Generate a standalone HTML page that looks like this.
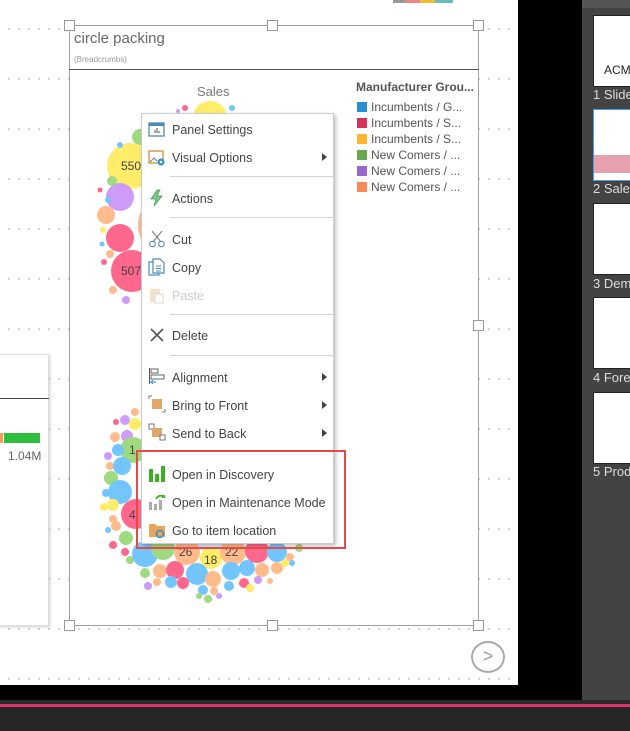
<!DOCTYPE html>
<html><head><style>
*{margin:0;padding:0;box-sizing:border-box}
body{width:630px;height:731px;overflow:hidden;background:#000;font-family:"Liberation Sans",sans-serif;position:relative}
.abs{position:absolute}
#canvas{left:0;top:0;width:518px;height:685px;background:#fff;
background-image:radial-gradient(circle,#555 0.5px,transparent 0.8px);background-size:10px 50px;background-position:4px 4px}
.panel{left:69px;top:25px;width:410px;height:601px;background:#fff;border:1px solid #a0a0a0}
.h{width:11px;height:11px;border:1px solid #999;background:#fff}
.menu{left:141px;top:113px;width:193px;height:431px;background:#fff;border:1px solid #ccc;box-shadow:2px 2px 4px rgba(0,0,0,.25)}
.it{position:absolute;left:30px;font-size:12.5px;color:#444;line-height:16px}
.sep{position:absolute;left:28px;right:0;height:1px;background:#d4d4d4}
.arr{position:absolute;right:6px;width:0;height:0;border-left:5px solid #444;border-top:4px solid transparent;border-bottom:4px solid transparent}
.ic{position:absolute;left:6px;width:18px;height:18px}
.rp{left:582px;top:0;width:48px;height:700px;background:#434343}
.th{position:absolute;left:11px;width:40px;height:72px;background:#fff;border:1px solid #222}
.tl{position:absolute;left:11px;color:#ddd;font-size:13px;white-space:nowrap}
.leg{position:absolute;left:357px;font-size:12px;color:#555;white-space:nowrap}
.leg i{display:inline-block;width:10px;height:10px;margin-right:4px;vertical-align:-1px}
</style></head><body>
<div class="abs" id="canvas"></div>
<div class="abs" style="left:393px;top:0;width:60px;height:3px;background:linear-gradient(90deg,#999 0 20%,#e88 20% 45%,#eb3 45% 70%,#6bb 70%)"></div>
<div class="abs" style="left:-2px;top:354px;width:51px;height:272px;background:#fff;border:1px solid #ddd;box-shadow:1px 1px 3px rgba(0,0,0,.2)"></div>
<div class="abs" style="left:0;top:398px;width:49px;height:1px;background:#445"></div>
<div class="abs" style="left:0;top:433px;width:3px;height:10px;background:#f0a050"></div>
<div class="abs" style="left:4px;top:433px;width:36px;height:10px;background:#2ebd3c"></div>
<div class="abs" style="left:8px;top:449px;font-size:12px;color:#666">1.04M</div>
<div class="abs panel"></div>
<div class="abs" style="left:74px;top:30px;font-size:15px;color:#666">circle packing</div>
<div class="abs" style="left:74px;top:55px;font-size:8px;color:#999">(Breadcrumbs)</div>
<div class="abs" style="left:69px;top:69px;width:410px;height:1px;background:#555"></div>
<div class="abs" style="left:197px;top:84px;font-size:13px;color:#777">Sales</div>
<svg class="abs" style="left:0;top:0" width="518" height="685">
<g opacity=".85">
<!-- top cluster -->
<circle cx="172" cy="225" r="34" fill="#ffb079"/>
<circle cx="210" cy="118" r="17" fill="#ffe94f"/>
<circle cx="140" cy="137" r="8" fill="#8fd46a"/>
<circle cx="130" cy="166" r="23" fill="#ffe94f"/>
<circle cx="120" cy="197" r="14" fill="#c78af7"/>
<circle cx="106" cy="215" r="9" fill="#ffb079"/>
<circle cx="120" cy="238" r="14" fill="#ff4d7a"/>
<circle cx="132" cy="271" r="21" fill="#ff4d7a"/>
<circle cx="112" cy="181" r="5" fill="#8fd46a"/>
<circle cx="108" cy="200" r="3" fill="#5bbcff"/>
<circle cx="103" cy="230" r="3" fill="#ffe94f"/>
<circle cx="110" cy="254" r="4" fill="#ffb079"/>
<circle cx="104" cy="262" r="3" fill="#ff4d7a"/>
<circle cx="100" cy="190" r="2.5" fill="#ff4d7a"/>
<circle cx="102" cy="244" r="2.5" fill="#5bbcff"/>
<circle cx="113" cy="290" r="4" fill="#ffb079"/>
<circle cx="126" cy="300" r="4" fill="#c78af7"/>
<circle cx="120" cy="145" r="3" fill="#5bbcff"/>
<circle cx="185" cy="108" r="3" fill="#ff4d7a"/>
<circle cx="178" cy="111" r="2" fill="#c78af7"/>
<circle cx="232" cy="108" r="3" fill="#5bbcff"/>
<!-- bottom cluster -->
<circle cx="210" cy="490" r="60" fill="#5bbcff" opacity=".3"/>
<circle cx="135" cy="412" r="4" fill="#ffb079"/>
<circle cx="125" cy="420" r="5" fill="#c78af7"/>
<circle cx="135" cy="424" r="6" fill="#ffe94f"/>
<circle cx="116" cy="422" r="3" fill="#ff4d7a"/>
<circle cx="115" cy="437" r="5" fill="#ffb079"/>
<circle cx="127" cy="436" r="6" fill="#c78af7"/>
<circle cx="133" cy="450" r="13" fill="#8fd46a"/>
<circle cx="118" cy="450" r="6" fill="#5bbcff"/>
<circle cx="108" cy="456" r="4" fill="#c78af7"/>
<circle cx="110" cy="466" r="4" fill="#ffb079"/>
<circle cx="122" cy="466" r="9" fill="#5bbcff"/>
<circle cx="111" cy="478" r="7" fill="#8fd46a"/>
<circle cx="106" cy="493" r="4" fill="#5bbcff"/>
<circle cx="120" cy="492" r="12" fill="#5bbcff"/>
<circle cx="104" cy="507" r="4" fill="#ffe94f"/>
<circle cx="113" cy="505" r="6" fill="#ffe94f"/>
<circle cx="113" cy="519" r="4" fill="#ffb079"/>
<circle cx="136" cy="514" r="15" fill="#ff4d7a"/>
<circle cx="116" cy="526" r="5" fill="#ffb079"/>
<circle cx="108" cy="530" r="3" fill="#5bbcff"/>
<circle cx="126" cy="538" r="7" fill="#8fd46a"/>
<circle cx="113" cy="545" r="4" fill="#ff4d7a"/>
<circle cx="125" cy="552" r="4" fill="#ff4d7a"/>
<circle cx="130" cy="560" r="4" fill="#8fd46a"/>
<circle cx="145" cy="554" r="13" fill="#5bbcff"/>
<circle cx="163" cy="548" r="12" fill="#8fd46a"/>
<circle cx="187" cy="552" r="13" fill="#ffb079"/>
<circle cx="211" cy="558" r="11" fill="#ffe94f"/>
<circle cx="233" cy="552" r="13" fill="#ffb079"/>
<circle cx="257" cy="551" r="12" fill="#ff4d7a"/>
<circle cx="277" cy="552" r="10" fill="#5bbcff"/>
<circle cx="290" cy="557" r="4" fill="#ffb079"/>
<circle cx="299" cy="548" r="4" fill="#8fd46a"/>
<circle cx="145" cy="573" r="5" fill="#8fd46a"/>
<circle cx="160" cy="571" r="7" fill="#ffb079"/>
<circle cx="175" cy="570" r="9" fill="#ff4d7a"/>
<circle cx="197" cy="574" r="11" fill="#5bbcff"/>
<circle cx="213" cy="579" r="8" fill="#ffb079"/>
<circle cx="231" cy="571" r="9" fill="#5bbcff"/>
<circle cx="247" cy="568" r="8" fill="#5bbcff"/>
<circle cx="262" cy="570" r="7" fill="#ffb079"/>
<circle cx="277" cy="568" r="6" fill="#ffb079"/>
<circle cx="285" cy="563" r="4" fill="#ffe94f"/>
<circle cx="292" cy="563" r="3" fill="#5bbcff"/>
<circle cx="148" cy="586" r="4" fill="#c78af7"/>
<circle cx="157" cy="582" r="4" fill="#ffb079"/>
<circle cx="171" cy="582" r="6" fill="#5bbcff"/>
<circle cx="183" cy="583" r="6" fill="#ff4d7a"/>
<circle cx="203" cy="590" r="5" fill="#5bbcff"/>
<circle cx="214" cy="591" r="4" fill="#ffb079"/>
<circle cx="229" cy="586" r="5" fill="#5bbcff"/>
<circle cx="244" cy="583" r="5" fill="#ff4d7a"/>
<circle cx="258" cy="580" r="4" fill="#c78af7"/>
<circle cx="270" cy="581" r="3" fill="#ffb079"/>
<circle cx="199" cy="596" r="3" fill="#8fd46a"/>
<circle cx="208" cy="599" r="4" fill="#8fd46a"/>
<circle cx="219" cy="596" r="3" fill="#c78af7"/>
<circle cx="250" cy="588" r="4" fill="#ffe94f"/>
</g>
<g font-size="12" fill="#444" font-family="Liberation Sans">
<text x="179" y="556">26</text>
<text x="225" y="556">22</text>
<text x="204" y="564">18</text>
<text x="121" y="170">550</text>
<text x="121" y="275">507</text>
<text x="129" y="519">4</text>
<text x="129" y="454">1</text>
</g>
</svg>
<div class="abs" style="left:356px;top:80px;font-size:12px;font-weight:bold;color:#555">Manufacturer Grou...</div>
<div class="leg" style="top:100px"><i style="background:#2a8fd8"></i>Incumbents / G...</div>
<div class="leg" style="top:116px"><i style="background:#d8325a"></i>Incumbents / S...</div>
<div class="leg" style="top:132px"><i style="background:#ffb52e"></i>Incumbents / S...</div>
<div class="leg" style="top:148px"><i style="background:#6aa84f"></i>New Comers / ...</div>
<div class="leg" style="top:164px"><i style="background:#9966cc"></i>New Comers / ...</div>
<div class="leg" style="top:180px"><i style="background:#f98a55"></i>New Comers / ...</div>
<div class="abs h" style="left:64px;top:20px"></div>
<div class="abs h" style="left:267px;top:20px"></div>
<div class="abs h" style="left:473px;top:20px"></div>
<div class="abs h" style="left:473px;top:320px"></div>
<div class="abs h" style="left:64px;top:620px"></div>
<div class="abs h" style="left:267px;top:620px"></div>
<div class="abs h" style="left:473px;top:620px"></div>
<div class="abs" style="left:471px;top:641px;width:34px;height:32px;border:2px solid #aaa;border-radius:50%;color:#999;font-size:18px;text-align:center;line-height:27px">&gt;</div>
<div class="abs menu">
<svg class="ic" style="top:7px" viewBox="0 0 18 18"><rect x="1" y="2" width="15" height="13" fill="none" stroke="#4a8ab8" stroke-width="1.3"/><rect x="1" y="2" width="15" height="3" fill="#4a8ab8"/><path d="M7 12V9M9 12V7M11 12V10" stroke="#555"/></svg>
<div class="it" style="top:8px">Panel Settings</div>
<svg class="ic" style="top:35px" viewBox="0 0 18 18"><rect x="1" y="2" width="14" height="12" fill="none" stroke="#d08a3a" stroke-width="1.3"/><path d="M2 13l4-4 3 3" stroke="#777" fill="none"/><circle cx="13" cy="13" r="3.5" fill="#2a8fd8"/><circle cx="13" cy="13" r="1.3" fill="#fff"/></svg>
<div class="it" style="top:36px">Visual Options</div><div class="arr" style="top:39px"></div>
<div class="sep" style="top:62px"></div>
<svg class="ic" style="top:75px" viewBox="0 0 18 18"><path d="M9 1L3 10h5l-2 7 8-10H9l3-6z" fill="#7cc88a" stroke="#3a9a50" stroke-width=".7"/></svg>
<div class="it" style="top:77px">Actions</div>
<div class="sep" style="top:103px"></div>
<svg class="ic" style="top:116px" viewBox="0 0 18 18"><path d="M4 1l9 11M14 1L5 12" stroke="#888" stroke-width="1.3"/><circle cx="4.5" cy="14" r="2.8" fill="none" stroke="#4a8ab8"/><circle cx="13.5" cy="14" r="2.8" fill="none" stroke="#4a8ab8"/></svg>
<div class="it" style="top:118px">Cut</div>
<svg class="ic" style="top:144px" viewBox="0 0 18 18"><rect x="1" y="4" width="10" height="13" fill="#fff" stroke="#4a8ab8" stroke-width="1.2"/><path d="M5 1h7l4 4v10H5z" fill="#fff" stroke="#4a8ab8" stroke-width="1.2"/><path d="M8 8h5M8 10.5h5M8 13h5" stroke="#4a8ab8"/></svg>
<div class="it" style="top:146px">Copy</div>
<svg class="ic" style="top:172px" viewBox="0 0 18 18"><rect x="2" y="3" width="10" height="13" fill="#f5e2cc"/><rect x="7" y="8" width="8" height="9" fill="#fff" stroke="#e8d8c8"/></svg>
<div class="it" style="top:174px;color:#ccc">Paste</div>
<div class="sep" style="top:200px"></div>
<svg class="ic" style="top:212px" viewBox="0 0 18 18"><path d="M3 3l12 12M15 3L3 15" stroke="#555" stroke-width="1.6"/></svg>
<div class="it" style="top:214px">Delete</div>
<div class="sep" style="top:241px"></div>
<svg class="ic" style="top:253px" viewBox="0 0 18 18"><path d="M1.5 1v16" stroke="#555"/><rect x="3" y="2" width="7" height="4" fill="none" stroke="#666"/><rect x="3" y="8" width="13" height="4" fill="none" stroke="#666"/><path d="M8 15H3l2-2M3 15l2 2" stroke="#2a8fd8" fill="none"/></svg>
<div class="it" style="top:256px">Alignment</div><div class="arr" style="top:259px"></div>
<svg class="ic" style="top:281px" viewBox="0 0 18 18"><path d="M1 4V1h3M17 14v3h-3" stroke="#777" fill="none"/><rect x="4" y="4" width="10" height="10" fill="#e0a66a"/></svg>
<div class="it" style="top:284px">Bring to Front</div><div class="arr" style="top:287px"></div>
<svg class="ic" style="top:309px" viewBox="0 0 18 18"><rect x="1" y="1" width="5" height="5" fill="#fff" stroke="#777"/><rect x="4" y="5" width="10" height="9" fill="#e0a66a"/><rect x="12" y="12" width="5" height="5" fill="#fff" stroke="#777"/></svg>
<div class="it" style="top:312px">Send to Back</div><div class="arr" style="top:315px"></div>
<div class="sep" style="top:337px"></div>
<svg class="ic" style="top:351px" viewBox="0 0 18 18"><rect x="1" y="4" width="4" height="13" fill="#38b21e"/><rect x="7" y="9" width="4" height="8" fill="#38b21e"/><rect x="13" y="1" width="4" height="16" fill="#38b21e"/></svg>
<div class="it" style="top:353px">Open in Discovery</div>
<svg class="ic" style="top:379px" viewBox="0 0 18 18"><rect x="1" y="9" width="3" height="8" fill="#aaa"/><rect x="6" y="11" width="3" height="6" fill="#aaa"/><rect x="11" y="7" width="3" height="10" fill="#aaa"/><path d="M8 6c2-4 6-4 8-2l-2 0M16 4l0-2" stroke="#38b21e" stroke-width="1.8" fill="none"/></svg>
<div class="it" style="top:381px">Open in Maintenance Mode</div>
<svg class="ic" style="top:407px" viewBox="0 0 18 18"><path d="M1 3h6l2 2h8v11H1z" fill="#e8a65a"/><circle cx="12" cy="13" r="3.5" fill="none" stroke="#2a8fd8" stroke-width="1.5"/></svg>
<div class="it" style="top:409px">Go to item location</div>
</div>
<div class="abs" style="left:136px;top:450px;width:210px;height:99px;border:2px solid #e84848"></div>
<div class="abs rp">
<div style="position:absolute;left:0;top:0;width:48px;height:8px;background:#555"></div>
<div class="th" style="top:15px"></div>
<div style="position:absolute;left:22px;top:63px;font-size:12px;color:#222">ACM</div>
<div class="tl" style="top:87px">1 Slide</div>
<div class="th" style="top:109px;border-color:#4aa0e0"><div style="position:absolute;left:0;top:45px;width:40px;height:18px;background:#e8a0b0"></div></div>
<div class="tl" style="top:181px">2 Sales</div>
<div class="th" style="top:203px"></div>
<div class="tl" style="top:276px">3 Dem</div>
<div class="th" style="top:297px"></div>
<div class="tl" style="top:370px">4 Fore</div>
<div class="th" style="top:392px"></div>
<div class="tl" style="top:464px">5 Prod</div>
</div>
<div class="abs" style="left:0;top:700px;width:630px;height:4px;background:#2a2a2a"></div>
<div class="abs" style="left:0;top:704px;width:630px;height:3px;background:#e0306a"></div>
<div class="abs" style="left:0;top:707px;width:630px;height:24px;background:#262626"></div>
</body></html>
